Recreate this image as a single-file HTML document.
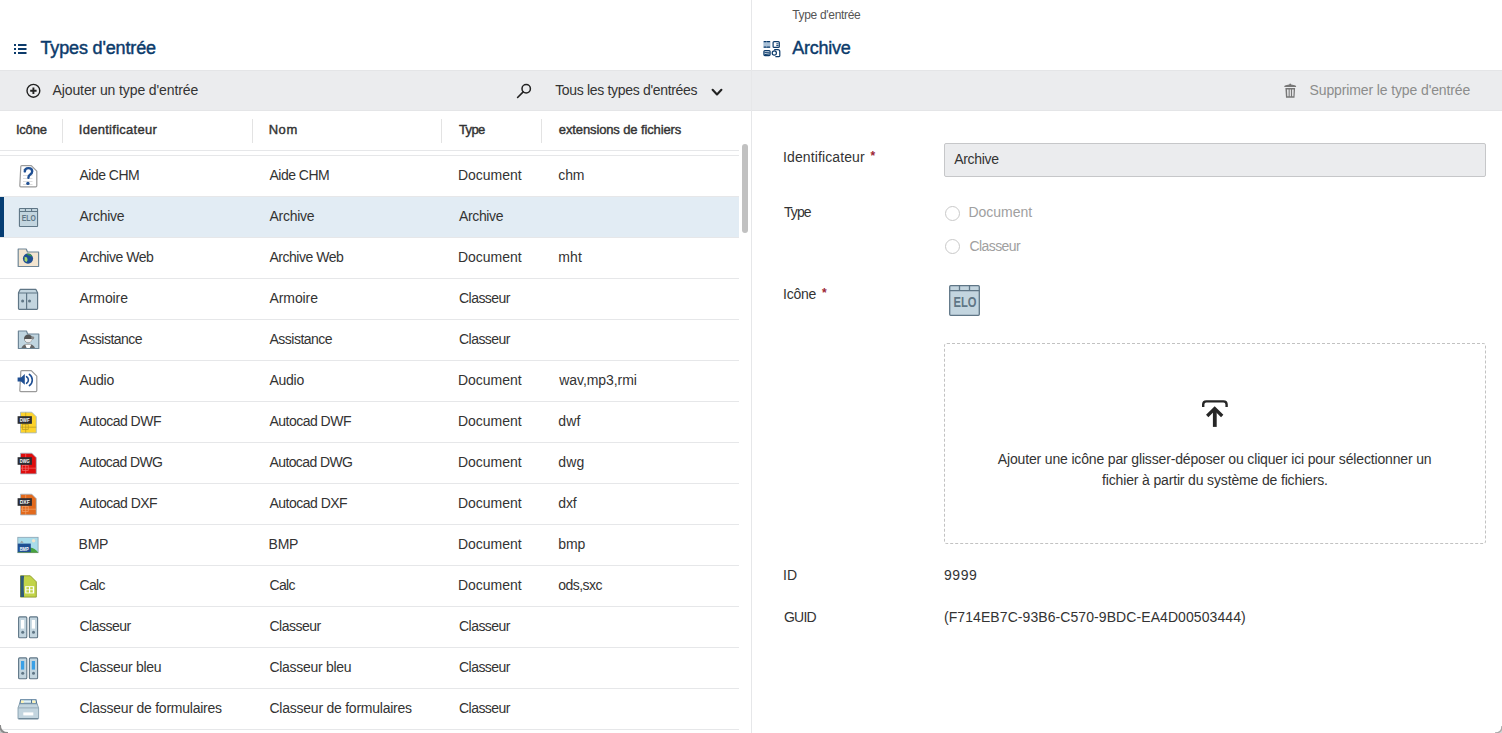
<!DOCTYPE html>
<html><head><meta charset="utf-8"><title>Types d'entrée</title>
<style>
html,body{margin:0;padding:0}
body{width:1502px;height:733px;overflow:hidden;background:#fff;position:relative;font-family:"Liberation Sans",sans-serif}
.a{position:absolute}
.t{position:absolute;white-space:pre;line-height:20px;font-family:"Liberation Sans",sans-serif}
svg{position:absolute;overflow:visible}
</style></head><body>
<!-- toolbar band -->
<div class="a" style="left:0;top:70px;width:1502px;height:41px;background:#ebecee;box-sizing:border-box;border-top:1px solid #e4e5e7;border-bottom:1px solid #e4e5e7"></div>
<!-- divider -->
<div class="a" style="left:751px;top:0;width:1px;height:733px;background:#e6e7e9"></div>
<!-- column header separators -->
<div class="a" style="left:62px;top:119px;width:1px;height:24px;background:#e3e3e3"></div>
<div class="a" style="left:252px;top:119px;width:1px;height:24px;background:#e3e3e3"></div>
<div class="a" style="left:441px;top:119px;width:1px;height:24px;background:#e3e3e3"></div>
<div class="a" style="left:541px;top:119px;width:1px;height:24px;background:#e3e3e3"></div>
<div class="a" style="left:0;top:150px;width:739px;height:1px;background:#e6e7e9"></div>
<div class="a" style="left:0;top:155px;width:739px;height:1px;background:#e6e7e9"></div><div class="a" style="left:0;top:196px;width:739px;height:1px;background:#e6e7e9"></div><div class="a" style="left:0;top:237px;width:739px;height:1px;background:#e6e7e9"></div><div class="a" style="left:0;top:278px;width:739px;height:1px;background:#e6e7e9"></div><div class="a" style="left:0;top:319px;width:739px;height:1px;background:#e6e7e9"></div><div class="a" style="left:0;top:360px;width:739px;height:1px;background:#e6e7e9"></div><div class="a" style="left:0;top:401px;width:739px;height:1px;background:#e6e7e9"></div><div class="a" style="left:0;top:442px;width:739px;height:1px;background:#e6e7e9"></div><div class="a" style="left:0;top:483px;width:739px;height:1px;background:#e6e7e9"></div><div class="a" style="left:0;top:524px;width:739px;height:1px;background:#e6e7e9"></div><div class="a" style="left:0;top:565px;width:739px;height:1px;background:#e6e7e9"></div><div class="a" style="left:0;top:606px;width:739px;height:1px;background:#e6e7e9"></div><div class="a" style="left:0;top:647px;width:739px;height:1px;background:#e6e7e9"></div><div class="a" style="left:0;top:688px;width:739px;height:1px;background:#e6e7e9"></div><div class="a" style="left:0;top:729px;width:739px;height:1px;background:#e6e7e9"></div>
<!-- selected row -->
<div class="a" style="left:0;top:197px;width:739px;height:40px;background:#e2ecf4"></div>
<div class="a" style="left:0;top:197px;width:4px;height:40px;background:#053d73"></div>
<!-- scrollbar -->
<div class="a" style="left:742px;top:144px;width:6px;height:89px;background:#c1c1c1;border-radius:3px"></div>
<!-- input -->
<div class="a" style="left:944px;top:143px;width:542px;height:34px;box-sizing:border-box;background:#ebecee;border:1px solid #c6c7c9;border-radius:2px"></div>
<!-- radios -->
<div class="a" style="left:944.5px;top:206px;width:15px;height:15px;box-sizing:border-box;border:1px solid #c9c9c9;border-radius:50%;background:#fff"></div>
<div class="a" style="left:944.5px;top:239px;width:15px;height:15px;box-sizing:border-box;border:1px solid #c9c9c9;border-radius:50%;background:#fff"></div>
<!-- dropzone -->
<div class="a" style="left:944px;top:343px;width:542px;height:201px;box-sizing:border-box;border:1px dashed #c2c2c2;border-radius:3px"></div>
<svg width="1502" height="733" style="left:0;top:0"><g fill="#0c3b6b"><rect x="14" y="44" width="2" height="2"/><rect x="14" y="48" width="2" height="2"/><rect x="14" y="52" width="2" height="2"/><rect x="18" y="44" width="8.5" height="2"/><rect x="18" y="48" width="8.5" height="2"/><rect x="18" y="52" width="8.5" height="2"/></g><circle cx="33.4" cy="90.8" r="6.4" fill="none" stroke="#222" stroke-width="1.4"/><path d="M30.2 90.8h6.4M33.4 87.6v6.4" stroke="#222" stroke-width="1.9"/><circle cx="526.2" cy="88.8" r="4.2" fill="none" stroke="#222" stroke-width="1.5"/><path d="M523.2 91.9L517.6 97.5" stroke="#222" stroke-width="1.6" stroke-linecap="round"/><path d="M712.6 89.8L717 94.4L721.4 89.8" fill="none" stroke="#222" stroke-width="2.1" stroke-linecap="round" stroke-linejoin="round"/><g fill="#777"><path d="M1284.2 86.9q0-1.2 1.5-1.6l3.5-.8q.4-.9 1-.9t1 .9l3.5.8q1.5.4 1.5 1.6z"/><path d="M1285.4 88h9.7l-.6 9.8h-8.5zM1287 89.6l.3 6.7h1.3v-6.7zM1289.7 89.6v6.7h1.2v-6.7zM1292.1 89.6v6.7h1.3l.3-6.7z" fill-rule="evenodd"/></g><rect x="763.4" y="41" width="7" height="6.8" rx="1.2" fill="#a9c0d6"/><path d="M764.2 41.6h1.8M767.4 41.6h2.2M764.2 47.2h1.8M767.4 47.2h2.2" stroke="#0c3b6b" stroke-width="1.3" stroke-linecap="round"/><rect x="773.1" y="41.6" width="6.2" height="5.8" rx="1" fill="none" stroke="#0c3b6b" stroke-width="1.2"/><path d="M776.3 43.8h2.2M776.3 45.6h2.2" stroke="#0c3b6b" stroke-width="1"/><rect x="763.9" y="50.6" width="6.2" height="5" rx="1" fill="#dfe8f0" stroke="#0c3b6b" stroke-width="1.2"/><path d="M764.5 52.6l5.2 .2M764.5 54.6l5.2-.6" stroke="#0c3b6b" stroke-width="1"/><path d="M774.2 49.6h3.6q2 0 2 2v4.2q0 .8-.8.8h-3.6" fill="none" stroke="#0c3b6b" stroke-width="1.2"/><circle cx="774.3" cy="53" r="2.1" fill="#fff" stroke="#0c3b6b" stroke-width="1.2"/><path d="M1203.2 407v-2.4q0-3.2 3.2-3.2h17q3.2 0 3.2 3.2v2.4" fill="none" stroke="#262626" stroke-width="2.4"/><path d="M1207.2 416l7.5-7.4l7.5 7.4" fill="none" stroke="#262626" stroke-width="3.3"/><path d="M1214.8 409.5v17.4" stroke="#262626" stroke-width="3.8"/><path d="M0 725q0 8 8 8h-8z" fill="#c8c8c8"/><path d="M0 725q0 8 8 8" fill="none" stroke="#8a8a8a" stroke-width="1.8"/><path d="M1502 726q0 7-7 7h7z" fill="#d6d6d6"/><path d="M1502 726q0 7-7 7" fill="none" stroke="#aaa" stroke-width="1.4"/><g transform="translate(949 285) scale(1.0)"><rect x="0.7" y="0.7" width="29.6" height="29.6" rx="1" fill="#c3d5df" stroke="#5f7686" stroke-width="1.30"/><path d="M0.7 5.6h29.6M10.5 0.7v4.9M20.5 0.7v4.9" stroke="#5f7686" stroke-width="1.30"/><text x="16" y="22" text-anchor="middle" font-family="Liberation Sans" font-weight="700" font-size="14.5" fill="#5f7686" textLength="23" lengthAdjust="spacingAndGlyphs">ELO</text></g><path d="M20.8 166.6q0-1 1-1h9.5l5.5 5.5v14.7q0 1-1 1h-15q-1 0-1-1z" fill="#fff" stroke="#9a9a9a" stroke-width="1.2" stroke-linejoin="round"/><g stroke="#d9d9d9" stroke-width="0.9"><path d="M23 169.5h4M23 175.5h9.5M23 178.5h9.5M23 181.5h9.5M23 184.5h9.5"/></g><path d="M24.8 171.4q0-3.3 3.6-3.3q3.8 0 3.8 3.2q0 2-2 3.2q-1.8 1.1-1.8 3.2" fill="none" stroke="#1f4f93" stroke-width="2.4" stroke-linecap="round"/><circle cx="27.9" cy="183.4" r="1.7" fill="#1f4f93"/><g transform="translate(19 208) scale(0.6129032258064516)"><rect x="0.7" y="0.7" width="29.6" height="29.6" rx="1" fill="#c3d5df" stroke="#5f7686" stroke-width="1.79"/><path d="M0.7 5.6h29.6M10.5 0.7v4.9M20.5 0.7v4.9" stroke="#5f7686" stroke-width="1.79"/><text x="16" y="22" text-anchor="middle" font-family="Liberation Sans" font-weight="700" font-size="14.5" fill="#5f7686" textLength="23" lengthAdjust="spacingAndGlyphs">ELO</text></g><path d="M18.2 249.0h8l1.3 3h11.1v14.5h-20.4z" fill="#f3e5d0" stroke="#6e8697" stroke-width="1.2" stroke-linejoin="round"/><circle cx="28" cy="258.6" r="5.1" fill="#1f4f93"/><path d="M24.6 256.8l2.4 .6l.6 2.5l-1 2l-2-1.2z" fill="#a8dc6a"/><path d="M27.4 253.6q3 .2 4.6 2.4l-.8 .6q-2-1.6-3.8-1.5z" fill="#3ea23a"/><path d="M20.3 289.3h15.5l1.8 3.5v15.7q0 .8-.8.8h-17.5q-.8 0-.8-.8v-15.7z" fill="#c3d5df" stroke="#5f7686" stroke-width="1.2" stroke-linejoin="round"/><path d="M18.6 293h19M26.6 293v16" stroke="#5f7686" stroke-width="1.2"/><circle cx="22.6" cy="300.9" r="1.5" fill="#5f7686"/><circle cx="29.5" cy="300.9" r="1.5" fill="#5f7686"/><path d="M18.4 331.0h8l1.3 3h11.1v14.5h-20.4z" fill="#c0d5e0" stroke="#6e8697" stroke-width="1.2" stroke-linejoin="round"/><circle cx="28.2" cy="338.6" r="4.2" fill="#555"/><path d="M24.6 339h7.4q-.2 3.4-3.7 3.6q-3.5-.2-3.7-3.6z" fill="#eee"/><circle cx="32.7" cy="337.8" r="1.6" fill="#888"/><path d="M21.4 348q1.6-4 6.8-4.2q5.2.2 6.8 4.2z" fill="#666"/><path d="M25.2 344.4h6l-1.4 3.6h-3.2z" fill="#fff"/><path d="M20.8 371.6q0-1 1-1h9.5l5.5 5.5v14.5q0 1-1 1h-15q-1 0-1-1z" fill="#fff" stroke="#9a9a9a" stroke-width="1.2" stroke-linejoin="round"/><path d="M17.6 377.4h3.4l3.8-3.3v10.6l-3.8-3.3h-3.4z" fill="#1f4f93"/><path d="M26.6 376.7q1.8 1.1 1.8 3.3t-1.8 3.3M29.4 374.4q2.9 2.2 2.9 5.6t-2.9 5.6" fill="none" stroke="#1f4f93" stroke-width="1.6" stroke-linecap="round"/><path d="M20.5 412.2h11.3l4.5 4.5v16.2h-15.8z" fill="#fdd32c" stroke="#9fb6c6" stroke-width="0.8"/><g stroke="#b89a20" stroke-width="0.7" fill="none"><path d="M25.7 412.5v20.3M20.5 427.2h15.8"/><rect x="22.3" y="424.6" width="5.9" height="5"/></g><rect x="17.6" y="416.2" width="14.3" height="7.6" fill="#2b2d33"/><text x="24.7" y="422.3" text-anchor="middle" font-family="Liberation Sans" font-weight="700" font-size="6" fill="#fff" textLength="10" lengthAdjust="spacingAndGlyphs">DWF</text><path d="M20.5 453.2h11.3l4.5 4.5v16.2h-15.8z" fill="#de0d0d" stroke="#9fb6c6" stroke-width="0.8"/><g stroke="#f36a6a" stroke-width="0.7" fill="none"><path d="M25.7 453.5v20.3M20.5 468.2h15.8"/><rect x="22.3" y="465.6" width="5.9" height="5"/></g><rect x="17.6" y="457.2" width="14.3" height="7.6" fill="#2b2d33"/><text x="24.7" y="463.3" text-anchor="middle" font-family="Liberation Sans" font-weight="700" font-size="6" fill="#fff" textLength="10" lengthAdjust="spacingAndGlyphs">DWG</text><path d="M20.5 494.2h11.3l4.5 4.5v16.2h-15.8z" fill="#e26a1d" stroke="#9fb6c6" stroke-width="0.8"/><g stroke="#f2a26a" stroke-width="0.7" fill="none"><path d="M25.7 494.5v20.3M20.5 509.2h15.8"/><rect x="22.3" y="506.6" width="5.9" height="5"/></g><rect x="17.6" y="498.2" width="14.3" height="7.6" fill="#2b2d33"/><text x="24.7" y="504.3" text-anchor="middle" font-family="Liberation Sans" font-weight="700" font-size="6" fill="#fff" textLength="10" lengthAdjust="spacingAndGlyphs">DXF</text><rect x="17.8" y="537.3" width="20.3" height="15.4" fill="#a9dcea" stroke="#8aa2b2" stroke-width="0.8"/><circle cx="33.6" cy="540.8" r="1.7" fill="#f1e4cc"/><path d="M30 547.6q5 .8 8 4.6v.5h-8z" fill="#47a33f"/><path d="M20 542.8l1.8-2l1.8 2z" fill="#999"/><rect x="17.8" y="543.6" width="13" height="9" fill="#1f4f93"/><text x="24.2" y="550.6" text-anchor="middle" font-family="Liberation Sans" font-weight="700" font-size="5.5" fill="#fff" textLength="9" lengthAdjust="spacingAndGlyphs">BMP</text><rect x="17.8" y="552" width="20.3" height=".8" fill="#6a9a5a"/><path d="M20.5 575.8h9.8l6 6v15.3h-15.8z" fill="#c2d448" stroke="#8c9a2a" stroke-width="0.9" stroke-linejoin="round"/><path d="M20.5 575.8h3.6q-.8 5.6 0 21.3h-3.6z" fill="#2f5a7a"/><rect x="25.2" y="586.2" width="9" height="7.2" fill="#fff"/><g fill="#c2d448"><rect x="26.4" y="587.1" width="2.6" height="2.3"/><rect x="30.2" y="587.1" width="2.6" height="2.3"/><rect x="26.4" y="590.2" width="2.6" height="2.3"/><rect x="30.2" y="590.2" width="2.6" height="2.3"/></g><rect x="18.6" y="616.9" width="8.2" height="20.9" rx="1" fill="#c3d5df" stroke="#5f7686" stroke-width="1.1"/><rect x="21.0" y="620" width="3.2" height="8.6" fill="#ffffff"/><circle cx="22.700000000000003" cy="632.3" r="1.5" fill="#5f7686"/><rect x="29.4" y="616.9" width="8.2" height="20.9" rx="1" fill="#c3d5df" stroke="#5f7686" stroke-width="1.1"/><rect x="31.799999999999997" y="620" width="3.2" height="8.6" fill="#ffffff"/><circle cx="33.5" cy="632.3" r="1.5" fill="#5f7686"/><rect x="18.6" y="657.9" width="8.2" height="20.9" rx="1" fill="#c3d5df" stroke="#5f7686" stroke-width="1.1"/><rect x="21.0" y="661" width="3.2" height="8.6" fill="#3aa0e6"/><circle cx="22.700000000000003" cy="673.3" r="1.5" fill="#5f7686"/><rect x="29.4" y="657.9" width="8.2" height="20.9" rx="1" fill="#c3d5df" stroke="#5f7686" stroke-width="1.1"/><rect x="31.799999999999997" y="661" width="3.2" height="8.6" fill="#3aa0e6"/><circle cx="33.5" cy="673.3" r="1.5" fill="#5f7686"/><path d="M19.8 704l.8-4.2h15.4l.8 4.2z" fill="#dff1f7" stroke="#4f7494" stroke-width="1.1"/><path d="M19.6 703.3h17.3M31.5 699.8v8" stroke="#4f7494" stroke-width="1"/><g fill="#fdf2b3"><rect x="21" y="700.6" width="2.8" height="2.4"/><rect x="32.5" y="700.6" width="2.8" height="2.4"/><rect x="21" y="704.3" width="2.8" height="3"/><rect x="32.5" y="704.3" width="2.8" height="3"/></g><path d="M18 707.8l1.5-4h17.6l1.5 4v10.5q0 .8-.8.8h-19q-.8 0-.8-.8z" fill="#c3d5df" stroke="#7a95a6" stroke-width="0.8"/><path d="M18 707.9h20.6" stroke="#8aa0ae" stroke-width=".8"/><rect x="23.3" y="712.4" width="10" height="3" fill="#fff"/><path d="M18.5 718.6h19.6" stroke="#6a8494" stroke-width="1"/></svg>
<div class="t" style="left:40.50px;top:38.00px;font-size:18px;font-weight:400;color:#0c3b6b;letter-spacing:-0.154px;-webkit-text-stroke:0.45px #0c3b6b">Types d'entrée</div>
<div class="t" style="left:52.50px;top:79.80px;font-size:14px;font-weight:400;color:#333333;letter-spacing:-0.106px">Ajouter un type d'entrée</div>
<div class="t" style="left:555.20px;top:79.60px;font-size:14px;font-weight:400;color:#333333;letter-spacing:-0.324px">Tous les types d'entrées</div>
<div class="t" style="left:15.90px;top:120.20px;font-size:13px;font-weight:400;color:#333333;letter-spacing:-0.193px;-webkit-text-stroke:0.4px #333333">Icône</div>
<div class="t" style="left:78.80px;top:120.20px;font-size:13px;font-weight:400;color:#333333;letter-spacing:0.277px;-webkit-text-stroke:0.4px #333333">Identificateur</div>
<div class="t" style="left:268.70px;top:120.20px;font-size:13px;font-weight:400;color:#333333;letter-spacing:0.541px;-webkit-text-stroke:0.4px #333333">Nom</div>
<div class="t" style="left:459.00px;top:120.20px;font-size:13px;font-weight:400;color:#333333;letter-spacing:-0.651px;-webkit-text-stroke:0.4px #333333">Type</div>
<div class="t" style="left:558.80px;top:120.20px;font-size:13px;font-weight:400;color:#333333;letter-spacing:-0.120px;-webkit-text-stroke:0.4px #333333">extensions de fichiers</div>
<div class="t" style="left:79.50px;top:165.00px;font-size:14px;font-weight:400;color:#333333;letter-spacing:-0.519px">Aide CHM</div>
<div class="t" style="left:269.50px;top:165.00px;font-size:14px;font-weight:400;color:#333333;letter-spacing:-0.519px">Aide CHM</div>
<div class="t" style="left:458.00px;top:165.00px;font-size:14px;font-weight:400;color:#333333;letter-spacing:-0.031px">Document</div>
<div class="t" style="left:558.30px;top:165.00px;font-size:14px;font-weight:400;color:#333333;letter-spacing:-0.143px">chm</div>
<div class="t" style="left:79.50px;top:206.00px;font-size:14px;font-weight:400;color:#333333;letter-spacing:-0.283px">Archive</div>
<div class="t" style="left:269.50px;top:206.00px;font-size:14px;font-weight:400;color:#333333;letter-spacing:-0.283px">Archive</div>
<div class="t" style="left:459.00px;top:206.00px;font-size:14px;font-weight:400;color:#333333;letter-spacing:-0.366px">Archive</div>
<div class="t" style="left:79.50px;top:247.00px;font-size:14px;font-weight:400;color:#333333;letter-spacing:-0.482px">Archive Web</div>
<div class="t" style="left:269.50px;top:247.00px;font-size:14px;font-weight:400;color:#333333;letter-spacing:-0.482px">Archive Web</div>
<div class="t" style="left:458.00px;top:247.00px;font-size:14px;font-weight:400;color:#333333;letter-spacing:-0.031px">Document</div>
<div class="t" style="left:558.30px;top:247.00px;font-size:14px;font-weight:400;color:#333333;letter-spacing:0.126px">mht</div>
<div class="t" style="left:79.50px;top:288.00px;font-size:14px;font-weight:400;color:#333333;letter-spacing:-0.087px">Armoire</div>
<div class="t" style="left:269.50px;top:288.00px;font-size:14px;font-weight:400;color:#333333;letter-spacing:-0.087px">Armoire</div>
<div class="t" style="left:459.00px;top:288.00px;font-size:14px;font-weight:400;color:#333333;letter-spacing:-0.540px">Classeur</div>
<div class="t" style="left:79.50px;top:329.00px;font-size:14px;font-weight:400;color:#333333;letter-spacing:-0.512px">Assistance</div>
<div class="t" style="left:269.50px;top:329.00px;font-size:14px;font-weight:400;color:#333333;letter-spacing:-0.512px">Assistance</div>
<div class="t" style="left:459.00px;top:329.00px;font-size:14px;font-weight:400;color:#333333;letter-spacing:-0.540px">Classeur</div>
<div class="t" style="left:79.50px;top:370.00px;font-size:14px;font-weight:400;color:#333333;letter-spacing:-0.280px">Audio</div>
<div class="t" style="left:269.50px;top:370.00px;font-size:14px;font-weight:400;color:#333333;letter-spacing:-0.280px">Audio</div>
<div class="t" style="left:458.00px;top:370.00px;font-size:14px;font-weight:400;color:#333333;letter-spacing:-0.031px">Document</div>
<div class="t" style="left:559.30px;top:370.00px;font-size:14px;font-weight:400;color:#333333;letter-spacing:-0.070px">wav,mp3,rmi</div>
<div class="t" style="left:79.50px;top:411.00px;font-size:14px;font-weight:400;color:#333333;letter-spacing:-0.519px">Autocad DWF</div>
<div class="t" style="left:269.50px;top:411.00px;font-size:14px;font-weight:400;color:#333333;letter-spacing:-0.519px">Autocad DWF</div>
<div class="t" style="left:458.00px;top:411.00px;font-size:14px;font-weight:400;color:#333333;letter-spacing:-0.031px">Document</div>
<div class="t" style="left:558.30px;top:411.00px;font-size:14px;font-weight:400;color:#333333;letter-spacing:0.202px">dwf</div>
<div class="t" style="left:79.50px;top:452.00px;font-size:14px;font-weight:400;color:#333333;letter-spacing:-0.609px">Autocad DWG</div>
<div class="t" style="left:269.50px;top:452.00px;font-size:14px;font-weight:400;color:#333333;letter-spacing:-0.609px">Autocad DWG</div>
<div class="t" style="left:458.00px;top:452.00px;font-size:14px;font-weight:400;color:#333333;letter-spacing:-0.031px">Document</div>
<div class="t" style="left:558.30px;top:452.00px;font-size:14px;font-weight:400;color:#333333;letter-spacing:0.152px">dwg</div>
<div class="t" style="left:79.50px;top:493.00px;font-size:14px;font-weight:400;color:#333333;letter-spacing:-0.511px">Autocad DXF</div>
<div class="t" style="left:269.50px;top:493.00px;font-size:14px;font-weight:400;color:#333333;letter-spacing:-0.511px">Autocad DXF</div>
<div class="t" style="left:458.00px;top:493.00px;font-size:14px;font-weight:400;color:#333333;letter-spacing:-0.031px">Document</div>
<div class="t" style="left:558.30px;top:493.00px;font-size:14px;font-weight:400;color:#333333;letter-spacing:-0.193px">dxf</div>
<div class="t" style="left:78.50px;top:534.00px;font-size:14px;font-weight:400;color:#333333;letter-spacing:-0.200px">BMP</div>
<div class="t" style="left:268.50px;top:534.00px;font-size:14px;font-weight:400;color:#333333;letter-spacing:-0.200px">BMP</div>
<div class="t" style="left:458.00px;top:534.00px;font-size:14px;font-weight:400;color:#333333;letter-spacing:-0.031px">Document</div>
<div class="t" style="left:558.30px;top:534.00px;font-size:14px;font-weight:400;color:#333333;letter-spacing:-0.174px">bmp</div>
<div class="t" style="left:79.50px;top:575.00px;font-size:14px;font-weight:400;color:#333333;letter-spacing:-0.636px">Calc</div>
<div class="t" style="left:269.50px;top:575.00px;font-size:14px;font-weight:400;color:#333333;letter-spacing:-0.636px">Calc</div>
<div class="t" style="left:458.00px;top:575.00px;font-size:14px;font-weight:400;color:#333333;letter-spacing:-0.031px">Document</div>
<div class="t" style="left:558.30px;top:575.00px;font-size:14px;font-weight:400;color:#333333;letter-spacing:-0.560px">ods,sxc</div>
<div class="t" style="left:79.50px;top:616.00px;font-size:14px;font-weight:400;color:#333333;letter-spacing:-0.526px">Classeur</div>
<div class="t" style="left:269.50px;top:616.00px;font-size:14px;font-weight:400;color:#333333;letter-spacing:-0.526px">Classeur</div>
<div class="t" style="left:459.00px;top:616.00px;font-size:14px;font-weight:400;color:#333333;letter-spacing:-0.540px">Classeur</div>
<div class="t" style="left:79.50px;top:657.00px;font-size:14px;font-weight:400;color:#333333;letter-spacing:-0.301px">Classeur bleu</div>
<div class="t" style="left:269.50px;top:657.00px;font-size:14px;font-weight:400;color:#333333;letter-spacing:-0.301px">Classeur bleu</div>
<div class="t" style="left:459.00px;top:657.00px;font-size:14px;font-weight:400;color:#333333;letter-spacing:-0.540px">Classeur</div>
<div class="t" style="left:79.50px;top:698.00px;font-size:14px;font-weight:400;color:#333333;letter-spacing:-0.242px">Classeur de formulaires</div>
<div class="t" style="left:269.50px;top:698.00px;font-size:14px;font-weight:400;color:#333333;letter-spacing:-0.242px">Classeur de formulaires</div>
<div class="t" style="left:459.00px;top:698.00px;font-size:14px;font-weight:400;color:#333333;letter-spacing:-0.540px">Classeur</div>
<div class="t" style="left:792.20px;top:4.70px;font-size:12px;font-weight:400;color:#555555;letter-spacing:-0.314px">Type d'entrée</div>
<div class="t" style="left:792.30px;top:37.70px;font-size:18px;font-weight:400;color:#0c3b6b;letter-spacing:-0.252px;-webkit-text-stroke:0.4px #0c3b6b">Archive</div>
<div class="t" style="left:1309.50px;top:80.00px;font-size:14px;font-weight:400;color:#8c8c8c;letter-spacing:-0.119px">Supprimer le type d'entrée</div>
<div class="t" style="left:783.00px;top:147.20px;font-size:14px;font-weight:400;color:#333333;letter-spacing:0.116px">Identificateur</div>
<div class="t" style="left:870.50px;top:146.00px;font-size:12px;font-weight:700;color:#9c2535;letter-spacing:0.000px">*</div>
<div class="t" style="left:954.20px;top:149.00px;font-size:14px;font-weight:400;color:#333333;letter-spacing:-0.316px">Archive</div>
<div class="t" style="left:784.00px;top:201.70px;font-size:14px;font-weight:400;color:#333333;letter-spacing:-0.922px">Type</div>
<div class="t" style="left:968.50px;top:202.30px;font-size:14px;font-weight:400;color:#a0a0a0;letter-spacing:-0.031px">Document</div>
<div class="t" style="left:969.50px;top:236.00px;font-size:14px;font-weight:400;color:#a0a0a0;letter-spacing:-0.583px">Classeur</div>
<div class="t" style="left:783.00px;top:284.00px;font-size:14px;font-weight:400;color:#333333;letter-spacing:-0.240px">Icône</div>
<div class="t" style="left:822.00px;top:283.00px;font-size:12px;font-weight:700;color:#9c2535;letter-spacing:0.000px">*</div>
<div class="t" style="left:997.80px;top:449.40px;font-size:14px;font-weight:400;color:#333333;letter-spacing:-0.158px">Ajouter une icône par glisser-déposer ou cliquer ici pour sélectionner un</div>
<div class="t" style="left:1102.00px;top:470.00px;font-size:14px;font-weight:400;color:#333333;letter-spacing:-0.153px">fichier à partir du système de fichiers.</div>
<div class="t" style="left:783.00px;top:564.80px;font-size:14px;font-weight:400;color:#333333;letter-spacing:0.000px">ID</div>
<div class="t" style="left:944.00px;top:564.80px;font-size:14px;font-weight:400;color:#333333;letter-spacing:0.547px">9999</div>
<div class="t" style="left:784.00px;top:607.30px;font-size:14px;font-weight:400;color:#333333;letter-spacing:-0.797px">GUID</div>
<div class="t" style="left:944.00px;top:607.30px;font-size:14px;font-weight:400;color:#333333;letter-spacing:0.077px">(F714EB7C-93B6-C570-9BDC-EA4D00503444)</div>
</body></html>
